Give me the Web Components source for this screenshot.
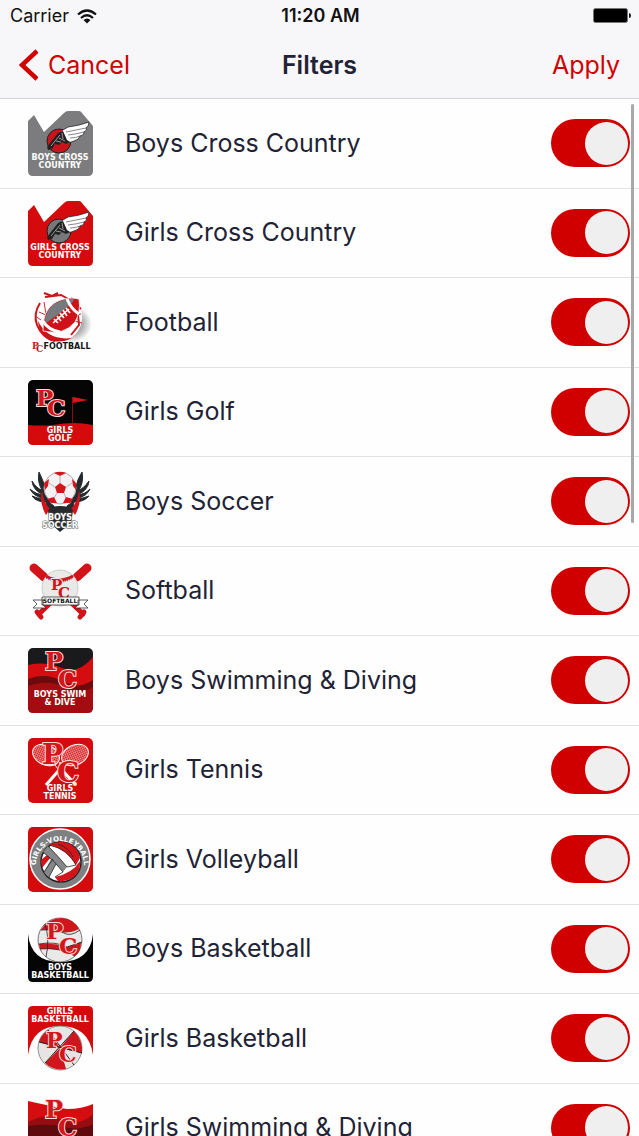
<!DOCTYPE html>
<html lang="en">
<head>
<meta charset="utf-8">
<meta name="viewport" content="width=device-width, initial-scale=1">
<title>Filters</title>
<style>
  html, body { margin: 0; height: 100%; }
  body {
    background: #fefefe;
    color: #1f2335;
    font-family: Inter, "Liberation Sans", sans-serif;
    --accent: #d00000;
    --line: #e2e1e4;
  }
</style>
</head>
<body>
<filter-screen>
  <status-bar slot="top" carrier="Carrier" time="11:20 AM"></status-bar>
  <nav-bar slot="top">
    <span slot="back">Cancel</span>
    <span slot="title">Filters</span>
    <span slot="action">Apply</span>
  </nav-bar>
  <filter-row icon="boys-xc">Boys Cross Country</filter-row>
  <filter-row icon="girls-xc">Girls Cross Country</filter-row>
  <filter-row icon="football">Football</filter-row>
  <filter-row icon="golf">Girls Golf</filter-row>
  <filter-row icon="soccer">Boys Soccer</filter-row>
  <filter-row icon="softball">Softball</filter-row>
  <filter-row icon="boys-swim">Boys Swimming &amp; Diving</filter-row>
  <filter-row icon="tennis">Girls Tennis</filter-row>
  <filter-row icon="volleyball">Girls Volleyball</filter-row>
  <filter-row icon="boys-basketball">Boys Basketball</filter-row>
  <filter-row icon="girls-basketball">Girls Basketball</filter-row>
  <filter-row icon="girls-swim">Girls Swimming &amp; Diving</filter-row>
</filter-screen>

<script>
const define = (name, html, setup) => {
  const template = document.createElement('template');
  template.innerHTML = html;
  customElements.define(name, class extends HTMLElement {
    constructor() {
      super();
      this.attachShadow({ mode: 'open' }).append(template.content.cloneNode(true));
    }
    connectedCallback() { if (setup) setup(this, this.shadowRoot); }
  });
};

// Two-letter school monogram; x and y are the baseline start of the P.
const pc = (x, y, size, dx, dy, fill = '#d2161c', edge = '#fbd9d6') =>
  `<g class="pc" font-size="${size}" fill="${fill}" stroke="${edge}">
     <text x="${x}" y="${y}">P</text><text x="${x + dx}" y="${y + dy}">C</text></g>`;

const lines = (y1, a, y2, b) => `<text class="cap" x="32" y="${y1}">${a}</text><text class="cap" x="32" y="${y2}">${b}</text>`;

const crossCountry = (bg, disc, word) => `
  <path fill="${bg}" d="M0 10 6 4 16 21 36 2Q38 0 40 0H51Q53 0 54 2L65 15V60Q65 65 60 65H5Q0 65 0 60Z"/>
  <circle cx="31" cy="30" r="12" fill="${disc}" stroke="#222"/>
  <path fill="#fff" stroke="#222" stroke-width=".8" d="M31 22Q36 18 40 16Q50 15 61 11Q61 15 58 17Q60 19 56 21Q57 24 52 25Q51 29 46 30Q43 32 38 31Q34 25 31 22Z"/>
  <path fill="none" stroke="#555" stroke-width=".7" d="M38 21Q48 19 58 17M40 24Q49 23 56 21M42 27Q48 27 52 25"/>
  <path fill="#222" d="M19 36 30 22 35 20 39 29 42 31 38 33 34 31 31 34 27 33 24 38 20 39Z"/>
  <path fill="none" stroke="#ccc" stroke-width=".7" d="M23 35 32 24M28 30 33 31M31 27 37 30M34 22 35 28"/>
  ${lines(49, word + ' CROSS', 57, 'COUNTRY')}`;

const waves = `
  <path fill="#d50d10" d="M0 17Q18 13 34 20T65 9V50H0Z"/>
  <path fill="#6c0a0d" d="M0 31Q17 24 34 33T65 32V46H0Z"/>
  <path fill="#a30c10" d="M0 38Q20 31 36 39T65 39V60Q65 65 60 65H5Q0 65 0 60Z"/>`;

const ICONS = {
  'boys-xc': crossCountry('#7c7c7e', '#c8141a', 'BOYS'),
  'girls-xc': crossCountry('#d40a0d', '#77787a', 'GIRLS'),
  'football': `
    <defs><radialGradient id="s"><stop offset=".55" stop-color="#777"/><stop offset="1" stop-color="#fff"/></radialGradient></defs>
    <ellipse cx="43" cy="34" rx="21" ry="19" fill="url(#s)" opacity=".6"/>
    <circle cx="31" cy="28" r="23" fill="#fff"/>
    <path fill="none" stroke="#c9151b" stroke-width="2" d="M12 13Q5 24 9 35Q14 48 27 51M17 7 33 5 42 10M16 3 24 6 30 3M43 8 49 14 51 35 43 45M45 12 53 19"/>
    <path fill="#c9151b" d="M10 31Q20 51 44 48Q35 53 23 51Q11 46 10 31Z"/>
    <path fill="none" stroke="#c9151b" stroke-width=".9" d="M11 22 18 25M16 12 18 24M46 31 54 33M48 25 53 24M7 26 13 30"/>
    <path fill="#cf1219" stroke="#fff" stroke-width=".8" d="M15 41Q14 20 28 12Q40 6 51 9Q53 22 47 32Q36 46 15 41Z"/>
    <path fill="#777a7c" d="M17 29Q20 16 30 12Q40 8 46 9Q47 13 18 33Z"/>
    <path fill="none" stroke="#fff" stroke-width="3" d="M39 9Q43 19 51 24M15 31Q20 40 32 42"/>
    <path fill="none" stroke="#fff" stroke-width="1.6" d="M25 33 41 19M26 29 30 33M29 26 33 31M32 23 36 28M35 20 39 26M38 18 42 23"/>
    ${pc(4, 59, 9, 4, 3, '#c9151b', 'none')}
    <text class="cap dark" x="39" y="59">FOOTBALL</text>`,
  'golf': `
    <rect width="65" height="64" rx="5" fill="#050505"/>
    <path fill="#d40a0d" d="M0 45Q12 46 25 45Q46 41 65 45V60Q65 65 60 65H5Q0 65 0 60Z"/>
    <path stroke="#8c0d10" d="M44.500 17V44"/><path fill="#d8141a" d="M45 17 60 20 45 23Z"/>
    ${pc(8, 26, 23, 11, 10)}
    ${lines(53, 'GIRLS', 61, 'GOLF')}`,
  'soccer': `
    <path fill="#262a2c" stroke="#262a2c" d="M18 33Q8 33 4 27Q10 30 15 29Q5 27 2 20Q9 26 14 25Q5 21 4 12Q9 20 14 21Q9 13 11 3Q15 11 17 18L22 34 26 37 25 45 20 41ZM46 33Q56 33 61 27Q54 30 50 29Q59 27 62 20Q56 26 51 25Q60 21 61 12Q55 20 51 21Q56 13 54 3Q49 11 48 18L43 34 39 37 40 45 45 41Z"/>
    <path fill="#cf151b" d="M14 21Q15 33 22 40L18 46Q11 34 14 21ZM51 21Q50 33 43 40L47 46Q54 34 51 21Z"/>
    <path fill="#262a2c" d="M20 42Q22 37 32 37Q43 37 45 42L43 54 32 63 22 54Z"/>
    <circle cx="32" cy="19" r="16" fill="#f3f1f1" stroke="#aaa"/>
    <path fill="#d3151c" d="M32 14 38 18 36 24H29L27 18ZM26 4 32 7 38 4 35 3H29ZM16 14 21 10 20 17 17 21ZM48 14 44 10 45 17 48 21ZM19 30 26 28 29 34 23 34ZM45 30 38 28 35 34 42 34Z"/>
    <path fill="none" stroke="#999" stroke-width=".7" d="M32 6V14M21 14 27 18M44 14 38 18M29 24 26 29M36 24 38 29"/>
    <text class="cap edge" x="32" y="51">BOYS</text><text class="cap edge" x="32" y="59">SOCCER</text>`,
  'softball': `
    <g stroke="#d2141a" stroke-linecap="round"><path stroke-width="9" d="M6 9 16 18M59 9 49 18"/><path stroke-width="5" d="M14 16 55 55M51 16 11 55"/><path stroke-width="5" d="M9 53 13 58M56 53 52 58"/></g>
    <circle cx="32" cy="29" r="18" fill="#e9e9e8" stroke="#ccc"/>
    <path fill="none" stroke="#c61a20" stroke-width="3" d="M18 17Q31 25 45 17"/><path fill="none" stroke="#8e1216" stroke-dasharray="1 1" d="M18 19Q31 27 45 19"/>
    ${pc(23, 31, 15, 7, 8, '#d2141a', '#e9e9e8')}
    <path fill="#fff" stroke="#333" stroke-width=".8" d="M15 41H5L9 45 5 49H18L15 46ZM50 41H60L56 45 60 49H47L50 46ZM14 38H51V46H14Z"/>
    <text class="cap small" x="32" y="44">SOFTBALL</text>`,
  'boys-swim': `<rect width="65" height="64" rx="5" fill="#1a1a1c"/>${waves}${pc(17, 22, 24, 13, 18)}${lines(49, 'BOYS SWIM', 57, '&amp; DIVE')}`,
  'girls-swim': `<path fill="#d50d10" d="M0 5Q22 10 39 13Q54 13 65 8V65H0Z"/><path fill="#950d11" d="M0 26Q18 16 34 24T65 18V65H0Z"/><path fill="#5f0a0d" d="M0 30Q20 27 36 31T65 28V65H0Z"/>${pc(17, 22, 24, 13, 18)}${lines(49, 'GIRLS SWIM', 57, '&amp; DIVE')}`,
  'tennis': `
    <defs><pattern id="n" width="2" height="2" patternUnits="userSpaceOnUse"><path d="M0 0H2M0 0V2" stroke="#fff" stroke-width=".7"/></pattern></defs>
    <rect width="65" height="65" rx="5" fill="#d40a0d"/>
    <g fill="url(#n)" stroke="#fff"><ellipse cx="18" cy="17" rx="14" ry="10" transform="rotate(25 18 17)"/><ellipse cx="47" cy="17" rx="14" ry="10" transform="rotate(-25 47 17)"/></g>
    <path stroke="#fff" fill="none" d="M26 26 31 32 32 24M39 26 34 32 32 24"/>
    <path stroke="#fff" stroke-width="3" d="M33 31 47 46M32 31 18 47"/>
    ${pc(14, 26, 28, 15, 18)}
    <circle cx="47" cy="46" r="2" fill="#ece9b5"/>
    ${lines(53, 'GIRLS', 61, 'TENNIS')}`,
  'volleyball': `
    <rect width="65" height="65" rx="5" fill="#d40a0d"/>
    <circle cx="32" cy="32" r="30" fill="#7e8082" stroke="#fff" stroke-width="1.500"/>
    <circle cx="33" cy="35" r="20" fill="#fff" stroke="#222" stroke-width="1.500"/>
    <path fill="#d1151b" d="M21 18Q30 13 40 16Q50 20 52 31L48 38Q37 21 21 18ZM52 34Q53 42 47 49Q40 55 30 54L27 50Q45 46 52 34ZM13 33 19 28 23 30 14 41Z"/>
    <path fill="#85878a" d="M15 25 20 19Q31 30 39 40L35 45Q27 35 15 25ZM23 32 28 37 21 50 16 45Z"/>
    <path fill="none" stroke="#222" stroke-width=".8" d="M21 18Q40 22 48 38M15 25Q27 34 35 45L27 50M20 19Q31 30 39 40L48 38M25 32 16 45M28 37 21 50M30 17Q41 21 45 30"/>
    <path id="arc" fill="none" d="M8 38A24 24 0 1 1 56 38"/>
    <text class="cap tiny"><textPath href="#arc" startOffset="50%">GIRLS-VOLLEYBALL</textPath></text>`,
  'boys-basketball': `
    <path fill="#050505" d="M0 17Q3 45 32 45Q62 45 65 17V60Q65 65 60 65H5Q0 65 0 60Z"/>
    <circle cx="32" cy="23" r="22" fill="#e9e9e8" stroke="#555" stroke-width=".8"/>
    <path fill="#cf161c" d="M13 13Q20 1 34 1Q46 2 51 12Q40 18 27 14Q18 12 13 13ZM11 27Q25 25 39 30L53 25Q53 35 47 39Q32 30 12 32Z"/>
    <path fill="none" stroke="#222" stroke-width=".8" d="M17 7Q22 22 18 40M13 13Q30 12 36 16T52 13M11 27Q27 24 39 30L54 25M12 32Q32 30 47 39"/>
    ${pc(18, 22, 23, 13, 15)}
    ${lines(53, 'BOYS', 61, 'BASKETBALL')}`,
  'girls-basketball': `
    <path fill="#d40a0d" d="M0 5Q0 0 5 0H60Q65 0 65 5V49Q61 20 32 20Q4 20 0 49Z"/>
    <circle cx="32" cy="42" r="22" fill="#e6e5e3" stroke="#777" stroke-width=".8"/>
    <path fill="#cf161c" d="M32 42 20 24Q13 29 11 36ZM32 42 46 25Q55 34 54 47ZM32 42 17 57Q25 65 38 63Z"/>
    <path fill="none" stroke="#222" d="M11 36 54 47M46 25 17 57M20 24 46 59"/>
    ${pc(18, 42, 22, 13, 14)}
    ${lines(8, 'GIRLS', 16, 'BASKETBALL')}`
};

define('status-bar', `
  <style>
    :host { display: grid; grid-template-columns: 1fr auto 1fr; align-items: center; height: 32px; padding: 0 8px 0 10px; font-size: 18px; line-height: 24px; color: #111; }
    .carrier { display: flex; align-items: center; gap: 8px; }
    .time { font-weight: 600; }
    .battery { justify-self: end; }
    svg { display: block; }
  </style>
  <span class="carrier"><span id="carrier"></span>
    <svg width="20" height="15" viewBox="0 0 20 15" aria-hidden="true"><g fill="none" stroke="#111" stroke-width="2.200"><path d="M1 5.500Q10-2.500 19 5.500"/><path d="M4 9Q10 3.500 16 9"/></g><path fill="#111" d="M6.500 11Q10 8 13.500 11L10 14.500Z"/></svg>
  </span>
  <span class="time" id="time"></span>
  <svg class="battery" width="38" height="16" viewBox="0 0 38 16" aria-hidden="true"><rect x=".5" y=".5" width="34" height="14" rx="2" fill="#000" stroke="#777"/><path fill="#111" d="M36 5Q38 5 38 7.500T36 10Z"/></svg>
`, (el, root) => {
  root.getElementById('carrier').textContent = el.getAttribute('carrier');
  root.getElementById('time').textContent = el.getAttribute('time');
});

define('nav-bar', `
  <style>
    :host { display: grid; grid-template-columns: 1fr auto 1fr; align-items: center; height: 66px; padding: 0 19px; border-bottom: 1px solid #d5d3d8; font-size: 25px; line-height: 32px; }
    button { display: flex; align-items: center; gap: 10px; padding: 0; border: 0; background: none; color: var(--accent); font: inherit; cursor: pointer; }
    .action { justify-self: end; }
    h1 { margin: 0; font-size: 25px; line-height: 32px; font-weight: 600; }
    svg { display: block; }
  </style>
  <button type="button"><svg width="19" height="32" viewBox="0 0 19 32" aria-hidden="true"><path fill="none" stroke="currentColor" stroke-width="4.500" d="M18 2 3 16 18 30"/></svg><slot name="back"></slot></button>
  <h1><slot name="title"></slot></h1>
  <button type="button" class="action"><slot name="action"></slot></button>
`);

define('filter-screen', `
  <style>
    :host { display: flex; flex-direction: column; height: 100vh; overflow: hidden; }
    header { background: #f7f6f9; }
    .body { position: relative; flex: 1; min-height: 0; display: flex; flex-direction: column; }
    main { flex: 1; min-height: 0; overflow-y: auto; scrollbar-width: none; }
    .thumb { position: absolute; top: 5px; right: 5px; width: 3px; height: 419px; border-radius: 2px; background: #a8a7a9; }
    ::slotted(filter-row) { height: 89px; }
    ::slotted(filter-row:nth-of-type(even)) { height: 88px; }
  </style>
  <header><slot name="top"></slot></header>
  <div class="body"><main><slot></slot></main><div class="thumb"></div></div>
`);

define('toggle-switch', `
  <style>
    :host { display: block; }
    input { appearance: none; display: flex; align-items: center; box-sizing: border-box; width: 79px; height: 48px; margin: 0; padding: 0 2px; border-radius: 24px; background: #ccc; cursor: pointer; }
    input:checked { justify-content: flex-end; background: var(--accent); }
    input::before { content: ""; width: 43px; height: 43px; border-radius: 50%; background: #efeff0; }
  </style>
  <input type="checkbox" role="switch" checked>
`, (el, root) => root.querySelector('input').setAttribute('aria-label', el.getAttribute('label')));

define('team-icon', `
  <style>
    :host { display: block; width: 65px; height: 65px; }
    svg { display: block; overflow: visible; }
    .cap { font: 700 8px "DejaVu Sans", sans-serif; fill: #fff; text-anchor: middle; }
    .dark { fill: #161616; }
    .small { font-size: 6px; fill: #161616; }
    .tiny { font-size: 7px; }
    .edge { stroke: #555; stroke-width: 1px; paint-order: stroke; }
    .pc { font-family: "DejaVu Serif", serif; font-weight: 700; stroke-width: 2px; paint-order: stroke; }
  </style>
  <svg width="65" height="65" viewBox="0 0 65 65"></svg>
`, (el, root) => { root.querySelector('svg').innerHTML = ICONS[el.getAttribute('name')]; });

define('filter-row', `
  <style>
    :host { display: block; border-bottom: 1px solid var(--line); }
    label { box-sizing: border-box; display: grid; grid-template-columns: 65px 1fr auto; column-gap: 32px; align-items: center; height: 100%; padding: 0 9px 0 28px; }
    .name { padding-bottom: 2px; font-size: 25px; line-height: 32px; }
    toggle-switch { padding-bottom: 1px; }
  </style>
  <label><team-icon></team-icon><span class="name"><slot></slot></span><toggle-switch></toggle-switch></label>
`, (el, root) => {
  const icon = document.createElement('team-icon');
  icon.setAttribute('name', el.getAttribute('icon'));
  root.querySelector('team-icon').replaceWith(icon);
  const toggle = document.createElement('toggle-switch');
  toggle.setAttribute('label', el.textContent);
  root.querySelector('toggle-switch').replaceWith(toggle);
  root.querySelector('.name').addEventListener('click', () => toggle.shadowRoot.querySelector('input').click());
});
</script>
</body>
</html>
